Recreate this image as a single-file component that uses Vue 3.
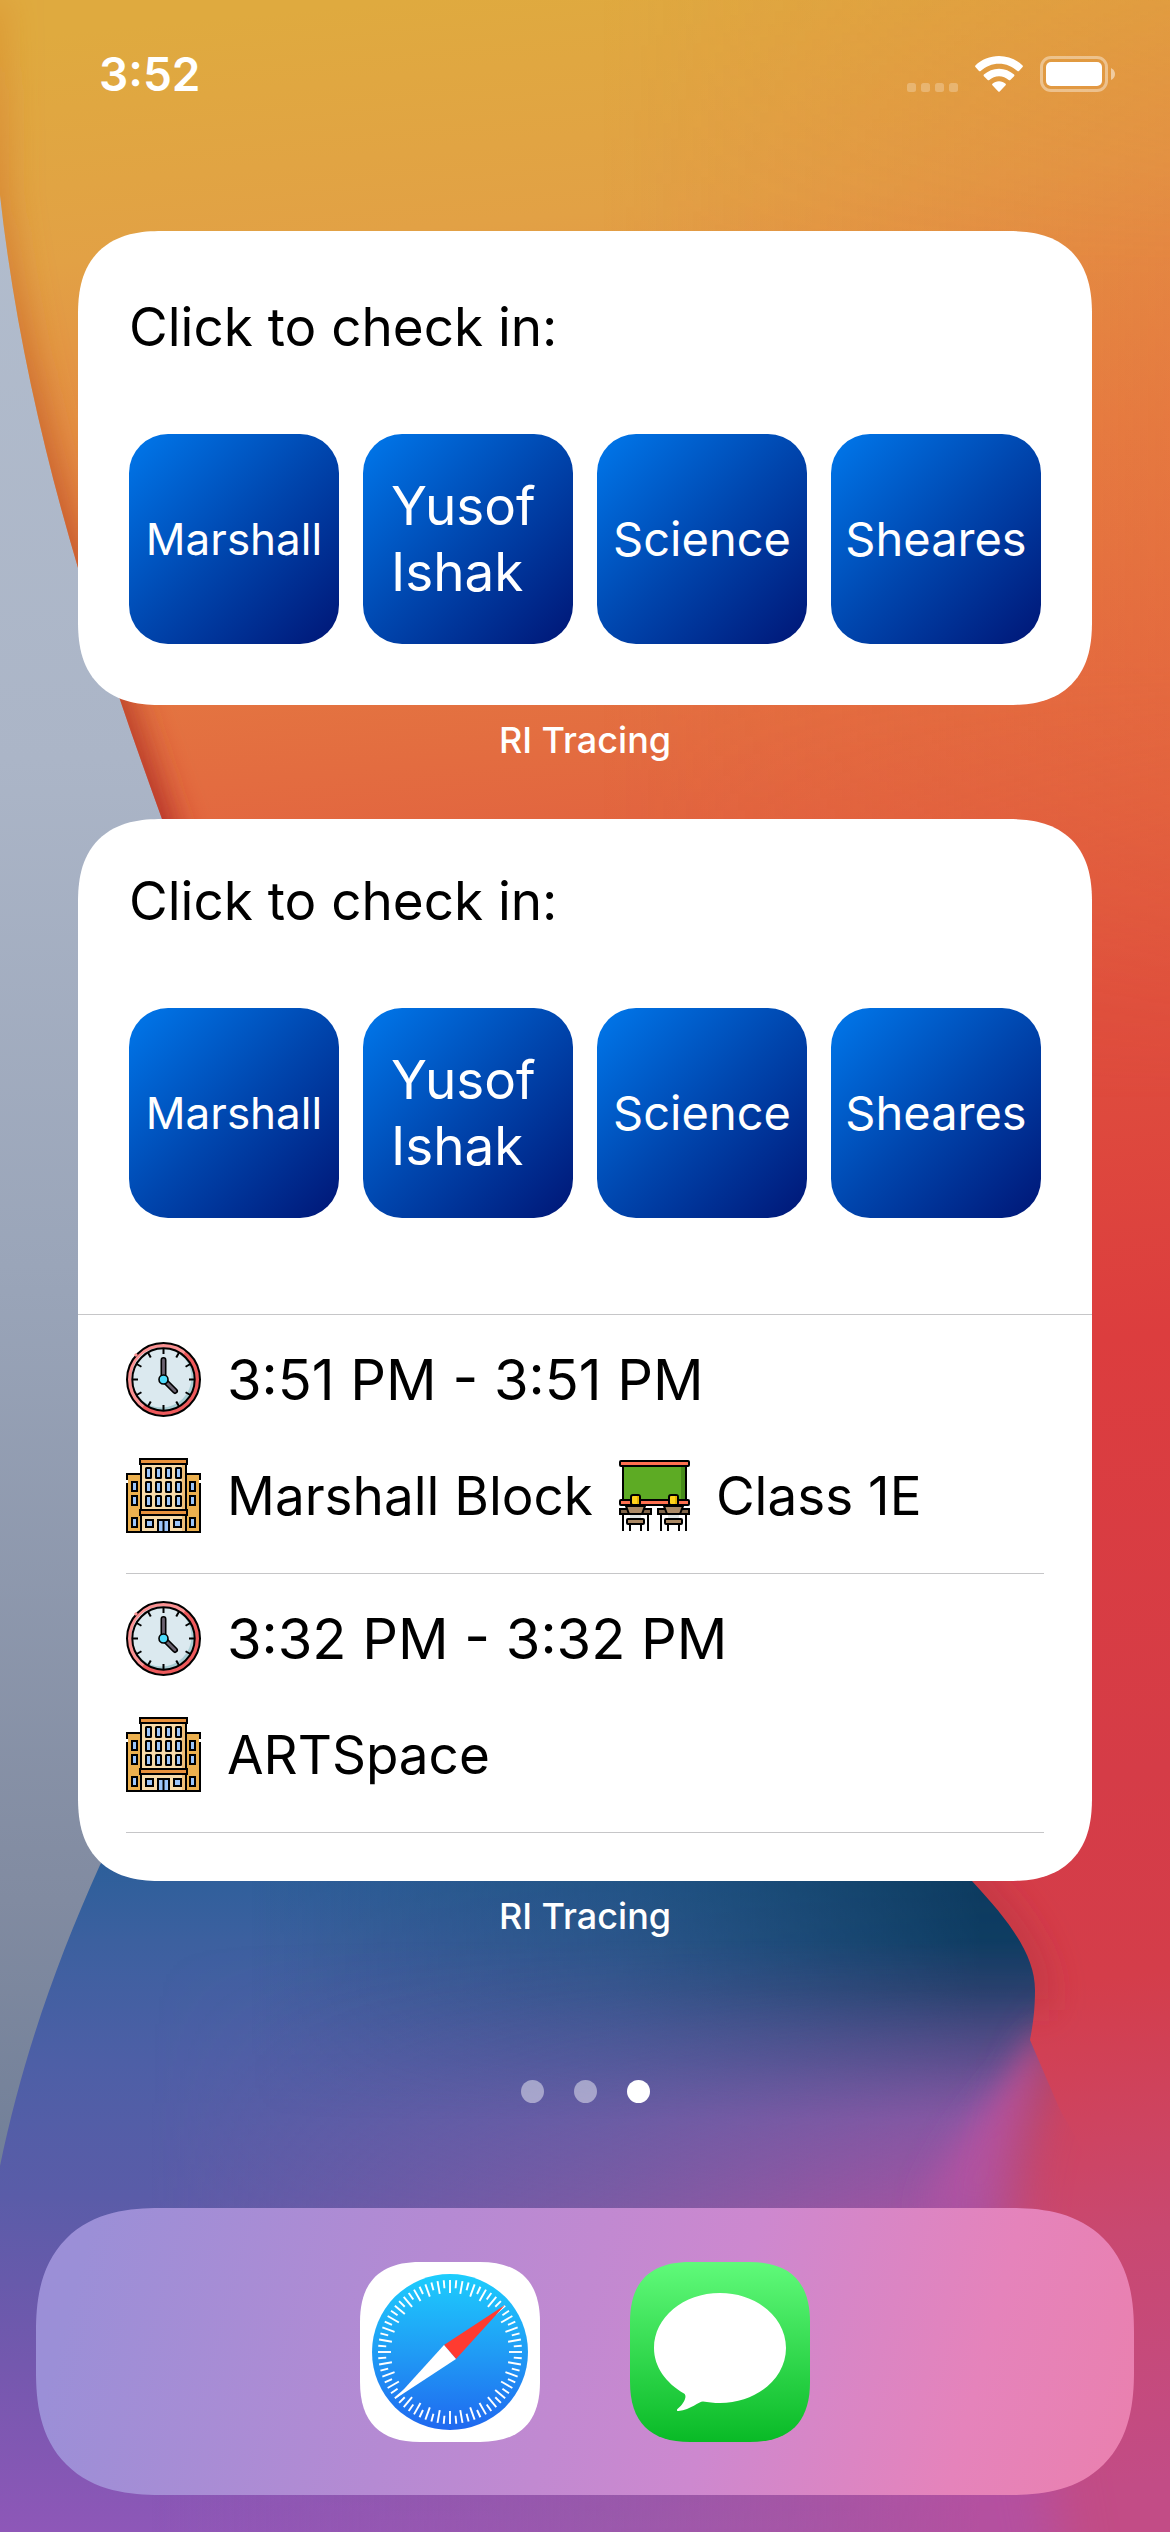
<script setup>
const blocks = [
  { name: 'Marshall', size: 'small' },
  { name: 'Yusof Ishak', size: 'large' },
  { name: 'Science', size: 'medium' },
  { name: 'Sheares', size: 'medium' },
]

const visits = [
  { time: '3:51 PM - 3:51 PM', place: 'Marshall Block', room: 'Class 1E' },
  { time: '3:32 PM - 3:32 PM', place: 'ARTSpace', room: '' },
]

const ticks = Array.from({ length: 72 }, (_, i) => ({ angle: i * 5, end: i % 2 ? 26 : 31 }))
const hours = Array.from({ length: 12 }, (_, i) => i * 30)
const windowCols = [20, 30, 40, 50]
const windowRows = [10, 24, 38]
const sideRows = [24, 38, 60]
const desks = [0, 38]
</script>

<template>
  <div class="screen">
    <svg class="wallpaper" viewBox="0 0 1170 2532" preserveAspectRatio="none" aria-hidden="true">
      <defs>
        <linearGradient id="grey" x1="0" y1="0" x2="0" y2="1">
          <stop offset="0" stop-color="#b4bfcf" />
          <stop offset=".3" stop-color="#abb5c7" />
          <stop offset=".5" stop-color="#9aa5b9" />
          <stop offset=".75" stop-color="#818ba1" />
          <stop offset=".86" stop-color="#717f98" />
        </linearGradient>
        <linearGradient id="warm" gradientUnits="userSpaceOnUse" x1="400" y1="0" x2="640" y2="2532">
          <stop offset="0" stop-color="#dfaa3f" />
          <stop offset=".09" stop-color="#e2a145" />
          <stop offset=".19" stop-color="#e58542" />
          <stop offset=".3" stop-color="#e36c40" />
          <stop offset=".42" stop-color="#df4f3d" />
          <stop offset=".55" stop-color="#dc3d3e" />
          <stop offset=".72" stop-color="#d53c47" />
          <stop offset=".8" stop-color="#d43d4a" />
          <stop offset=".9" stop-color="#c94870" />
          <stop offset="1" stop-color="#c24c86" />
        </linearGradient>
        <linearGradient id="warmRight" gradientUnits="userSpaceOnUse" x1="600" y1="0" x2="1170" y2="0">
          <stop offset="0" stop-color="#e8603c" stop-opacity="0" />
          <stop offset="1" stop-color="#e8603c" stop-opacity=".3" />
        </linearGradient>
        <linearGradient id="topFade" gradientUnits="userSpaceOnUse" x1="0" y1="0" x2="0" y2="1100">
          <stop offset="0" stop-color="#fff" stop-opacity=".5" />
          <stop offset=".25" stop-color="#fff" />
          <stop offset=".6" stop-color="#fff" />
          <stop offset="1" stop-color="#fff" stop-opacity="0" />
        </linearGradient>
        <mask id="topMask"><rect width="1170" height="1100" fill="url(#topFade)" /></mask>
        <linearGradient id="edge" gradientUnits="userSpaceOnUse" x1="0" y1="0" x2="0" y2="819">
          <stop offset="0" stop-color="#d9802c" stop-opacity=".3" />
          <stop offset=".5" stop-color="#c7602a" stop-opacity=".8" />
          <stop offset="1" stop-color="#b02c28" />
        </linearGradient>
        <linearGradient id="cool" gradientUnits="userSpaceOnUse" x1="0" y1="1860" x2="0" y2="2532">
          <stop offset="0" stop-color="#2c5f9a" />
          <stop offset=".12" stop-color="#3c609f" />
          <stop offset=".3" stop-color="#4d5fa6" />
          <stop offset=".5" stop-color="#5a5ca8" />
          <stop offset=".75" stop-color="#7458ae" />
          <stop offset="1" stop-color="#8e57b8" />
        </linearGradient>
        <linearGradient id="teal" gradientUnits="userSpaceOnUse" x1="250" y1="0" x2="980" y2="0">
          <stop offset="0" stop-color="#0e3c60" stop-opacity="0" />
          <stop offset=".5" stop-color="#0e4468" stop-opacity=".4" />
          <stop offset="1" stop-color="#0c3a5e" stop-opacity="1" />
        </linearGradient>
        <linearGradient id="tealFade" gradientUnits="userSpaceOnUse" x1="0" y1="1860" x2="0" y2="2120">
          <stop offset="0" stop-color="#fff" />
          <stop offset=".5" stop-color="#fff" stop-opacity=".9" />
          <stop offset=".78" stop-color="#fff" stop-opacity=".45" />
          <stop offset="1" stop-color="#fff" stop-opacity="0" />
        </linearGradient>
        <mask id="tealMask"><rect y="1700" width="1170" height="500" fill="url(#tealFade)" /></mask>
        <linearGradient id="pink" gradientUnits="userSpaceOnUse" x1="150" y1="0" x2="980" y2="0">
          <stop offset="0" stop-color="#b054a6" stop-opacity="0" />
          <stop offset=".55" stop-color="#a85aa0" stop-opacity=".5" />
          <stop offset="1" stop-color="#b4509f" stop-opacity="1" />
        </linearGradient>
        <linearGradient id="pinkFade" gradientUnits="userSpaceOnUse" x1="0" y1="1940" x2="0" y2="2532">
          <stop offset="0" stop-color="#fff" stop-opacity="0" />
          <stop offset=".2" stop-color="#fff" stop-opacity=".35" />
          <stop offset=".45" stop-color="#fff" stop-opacity=".85" />
          <stop offset="1" stop-color="#fff" />
        </linearGradient>
        <mask id="pinkMask"><rect y="1900" width="1170" height="632" fill="url(#pinkFade)" /></mask>
        <filter id="soft" x="-20%" y="-20%" width="140%" height="140%"><feGaussianBlur stdDeviation="26" /></filter>
        <filter id="soft2" x="-50%" y="-20%" width="200%" height="140%"><feGaussianBlur stdDeviation="16" /></filter>
        <mask id="coolMask" maskUnits="userSpaceOnUse" x="0" y="1600" width="1170" height="932">
          <path d="M-200 1400H1300V1890L1052 2040C1030 2100 1000 2180 1010 2260C1030 2400 1060 2500 1080 2700H-200Z" fill="#fff" filter="url(#soft)" />
        </mask>
        <clipPath id="warmClip"><path d="M0 0H1170V2532H700L260 1100C200 920 185 880 162 819C90 620 25 420 0 195Z" /></clipPath>
        <clipPath id="coolClip"><path d="M0 2166C22 2060 55 1965 100 1865L200 1700H860L972 1881C1010 1922 1035 1955 1035 1990C1035 2010 1033 2024 1030 2040L1060 2110L1170 2300V2532H0Z" /></clipPath>
      </defs>
      <rect width="1170" height="2532" fill="url(#grey)" />
      <g clip-path="url(#warmClip)">
        <rect width="1170" height="2532" fill="url(#warm)" />
        <rect width="1170" height="1100" fill="url(#warmRight)" mask="url(#topMask)" />
        <path d="M-12 0V195C13 420 78 620 150 819L248 1100" fill="none" stroke="url(#edge)" stroke-width="42" filter="url(#soft2)" />
        <path d="M860 1700L972 1881C1010 1922 1035 1955 1035 1990V2010" fill="none" stroke="#a82f40" stroke-opacity=".4" stroke-width="30" filter="url(#soft2)" />
      </g>
      <g clip-path="url(#coolClip)">
        <g mask="url(#coolMask)">
          <rect y="1700" width="1170" height="832" fill="url(#cool)" />
          <rect y="1700" width="1170" height="500" fill="url(#teal)" mask="url(#tealMask)" />
          <rect y="1900" width="1170" height="632" fill="url(#pink)" mask="url(#pinkMask)" />
          <path d="M1040 2030C1015 2085 950 2130 925 2215H1010C1020 2150 1040 2100 1050 2050Z" fill="#ae52a2" filter="url(#soft2)" />
        </g>
      </g>
    </svg>

    <header class="status">
      <time>3:52</time>
      <div class="signals">
        <svg class="cell" viewBox="0 0 51 9" aria-label="No signal">
          <rect v-for="x in [0, 14, 28, 42]" :key="x" :x="x" width="9" height="9" rx="2.5" fill="#fff" fill-opacity=".25" />
        </svg>
        <svg class="wifi" viewBox="0 0 48 36" fill="#fff" aria-label="Wi-Fi">
          <path d="M24 0C33 0 41.500 3.500 47.600 9.500Q48.300 10.300 47.600 11L44 15Q43.200 15.700 42.400 15C37.300 10.300 31 7.700 24 7.700S10.700 10.300 5.600 15Q4.800 15.700 4 15L.400 11Q-.300 10.300 .400 9.500C6.500 3.500 15 0 24 0Z" />
          <path d="M24 12.700C29.700 12.700 35 14.900 39.100 18.600Q39.900 19.400 39.100 20.200L35.300 24Q34.500 24.700 33.700 24C31 21.700 27.700 20.300 24 20.300S17 21.700 14.300 24Q13.500 24.700 12.700 24L8.900 20.200Q8.100 19.400 8.900 18.600C13 14.900 18.300 12.700 24 12.700Z" />
          <path d="M24 25.300C26.500 25.300 28.800 26.200 30.600 27.700Q31.300 28.500 30.600 29.200L24.700 35.500Q24 36.200 23.300 35.500L17.400 29.200Q16.700 28.500 17.400 27.700C19.200 26.200 21.500 25.300 24 25.300Z" />
        </svg>
        <svg class="battery" viewBox="0 0 75 36" aria-label="Battery full">
          <rect x="1.500" y="1.500" width="65" height="33" rx="9.500" fill="none" stroke="#fff" stroke-opacity=".4" stroke-width="3" />
          <rect x="6" y="6" width="56" height="24" rx="5" fill="#fff" />
          <path d="M71 12Q75 14 75 18T71 24Z" fill="#fff" fill-opacity=".5" />
        </svg>
      </div>
    </header>

    <main class="widgets">
      <section v-for="kind in ['compact', 'full']" :key="kind" class="widget">
        <div class="card" :class="kind">
          <div class="check-in">
            <h2>Click to check in:</h2>
            <div class="tiles">
              <button v-for="b in blocks" :key="b.name" type="button" class="tile" :class="b.size">
                <span>{{ b.name }}</span>
              </button>
            </div>
          </div>
          <ul v-if="kind === 'full'" class="visits">
            <li v-for="v in visits" :key="v.time">
              <div class="row time">
                <svg class="icon" viewBox="0 0 75 75" aria-hidden="true">
                  <circle cx="37.500" cy="37.500" r="36.500" fill="#ee5a5c" />
                  <path d="M16 66A36 36 0 0 1 60 9Z" fill="#fa9293" />
                  <circle cx="37.500" cy="37.500" r="36.500" fill="none" stroke="#000" stroke-width="2" />
                  <circle cx="37.500" cy="37.500" r="31" fill="#a9cdd3" />
                  <circle cx="35.500" cy="35.500" r="30" fill="#dbe9ef" />
                  <circle cx="37.500" cy="37.500" r="31.200" fill="none" stroke="#000" stroke-width="2" />
                  <path v-for="h in hours" :key="h" d="M37.500 6V12" stroke="#000" stroke-width="2" :transform="`rotate(${h} 37.5 37.5)`" />
                  <path d="M37.500 37.500V18M37.500 37.500L49 49" stroke="#000" stroke-width="6" stroke-linecap="round" />
                  <path d="M37.500 37.500V18M37.500 37.500L49 49" stroke="#6b6270" stroke-width="2.800" stroke-linecap="round" />
                  <circle cx="37.500" cy="37.500" r="4.500" fill="#4fdcfb" stroke="#000" stroke-width="1.600" />
                  <path d="M9 14L11 12" stroke="#fa9293" stroke-width="3" />
                </svg>
                <span>{{ v.time }}</span>
              </div>
              <div class="row">
                <svg class="icon" viewBox="0 0 75 75" stroke="#000" stroke-width="2" aria-hidden="true">
                  <path d="M1 16H15V74H1ZM60 16H74V74H60Z" fill="#ecb04e" />
                  <rect x="15" y="5" width="45" height="69" fill="#f8dba9" />
                  <path d="M57.500 7V73" stroke="#eebe77" stroke-width="3" />
                  <rect x="14" y="1" width="47" height="5" fill="#e8913c" />
                  <rect x="14" y="52" width="47" height="5" fill="#e8913c" />
                  <g fill="#9cc6fb">
                    <template v-for="y in windowRows" :key="y">
                      <rect v-for="x in windowCols" :key="x" :x="x" :y="y" width="5" height="10" rx=".5" />
                    </template>
                    <template v-for="y in sideRows" :key="y">
                      <rect x="6" :y="y" width="5" height="9" />
                      <rect x="64" :y="y" width="5" height="9" />
                    </template>
                    <rect x="20" y="62" width="7" height="7" />
                    <rect x="48" y="62" width="7" height="7" />
                    <path d="M32 74V62H37.500V74ZM37.500 62H43V74H37.500Z" />
                  </g>
                  <path d="M1 22V25M74 22V25" stroke="#fff" />
                </svg>
                <span>{{ v.place }}</span>
                <svg v-if="v.room" class="icon room" viewBox="0 0 71 71" stroke="#000" stroke-width="2" aria-hidden="true">
                  <rect x="4" y="6" width="63" height="34" fill="#5dab24" />
                  <rect x="62" y="7" width="4" height="32" fill="#478c1b" stroke="none" />
                  <rect x="1" y="1" width="69" height="5" rx="1" fill="#ff7050" />
                  <rect x="1" y="40" width="69" height="5" rx="1" fill="#ff7050" />
                  <g v-for="x in desks" :key="x" :transform="`translate(${x} 0)`">
                    <path d="M4 53V71M29 53V71" fill="none" />
                    <rect x="1" y="49" width="31" height="5" fill="#80654a" />
                    <rect x="12" y="35" width="9" height="10" rx="2" fill="#ffd31c" />
                    <path d="M18 36H20V44H18Z" fill="#e8b500" stroke="none" />
                    <path d="M7 46H26L23 54H10Z" fill="#ab8965" />
                    <rect x="11" y="55" width="11" height="4" fill="#dfe3e3" stroke="none" />
                    <path d="M11 60V71M22 60V71" />
                    <rect x="8" y="59" width="17" height="5" rx="1" fill="#ab8965" />
                  </g>
                </svg>
                <span v-if="v.room">{{ v.room }}</span>
              </div>
            </li>
          </ul>
        </div>
        <p class="name">RI Tracing</p>
      </section>
    </main>

    <nav class="pages" aria-label="Home screen pages">
      <i></i><i></i><i class="current"></i>
    </nav>

    <footer class="dock">
      <button type="button" class="app" aria-label="Safari">
        <svg viewBox="0 0 180 180" aria-hidden="true">
          <defs>
            <linearGradient id="sea" x1="0" y1="0" x2="0" y2="1">
              <stop offset="0" stop-color="#1dcdfd" />
              <stop offset=".5" stop-color="#209cf5" />
              <stop offset="1" stop-color="#1f68ef" />
            </linearGradient>
          </defs>
          <path d="M0 60C0 20 20 0 60 0H120C160 0 180 20 180 60V120C180 160 160 180 120 180H60C20 180 0 160 0 120Z" fill="#fff" />
          <circle cx="90" cy="90" r="78" fill="url(#sea)" />
          <path v-for="t in ticks" :key="t.angle" :d="`M90 18V${t.end}`" stroke="#fff" stroke-width="1.900" :transform="`rotate(${t.angle} 90 90)`" />
          <path d="M145 43L84 83L96 97Z" fill="#ff3b30" />
          <path d="M35 137L84 83L96 97Z" fill="#fff" />
        </svg>
      </button>
      <button type="button" class="app" aria-label="Messages">
        <svg viewBox="0 0 180 180" aria-hidden="true">
          <defs>
            <linearGradient id="leaf" x1="0" y1="0" x2="0" y2="1">
              <stop offset="0" stop-color="#60fa7a" />
              <stop offset="1" stop-color="#09ba26" />
            </linearGradient>
          </defs>
          <path d="M0 60C0 20 20 0 60 0H120C160 0 180 20 180 60V120C180 160 160 180 120 180H60C20 180 0 160 0 120Z" fill="url(#leaf)" />
          <path d="M90 31C126.500 31 156 55.500 156 86S126.500 141 90 141C84 141 78 140.300 73 139.500C69 139.500 61 147.500 48.500 149C46.500 149 46.500 147.800 48 146.500C53 142.500 58 134 54 131.500C36 121 24 105 24 86C24 55.500 53.500 31 90 31Z" fill="#fff" />
        </svg>
      </button>
    </footer>
  </div>
</template>

<style>
body {
  margin: 0;
}
</style>

<style scoped>
.screen {
  position: relative;
  isolation: isolate;
  display: flex;
  flex-direction: column;
  box-sizing: border-box;
  min-height: 100vh;
  padding-bottom: 37px;
  overflow: hidden;
  font-family: Inter, "Liberation Sans", sans-serif;
  color: #000;
}
.wallpaper {
  position: absolute;
  inset: 0;
  z-index: -1;
  width: 100%;
  height: 100%;
}
.status {
  display: flex;
  justify-content: space-between;
  align-items: center;
  height: 148px;
  margin-bottom: 83px;
  padding: 0 55px 0 99px;
  color: #fff;
}
.status time {
  font-size: 46px;
  font-weight: 600;
}
.signals {
  display: flex;
  align-items: flex-end;
  gap: 17px;
}
.signals svg {
  display: block;
  height: 36px;
}
.signals .cell {
  width: 51px;
  height: 9px;
}
.wifi {
  width: 48px;
}
.battery {
  width: 75px;
}
.widgets {
  display: flex;
  flex-direction: column;
  gap: 57px;
  padding: 0 78px;
}
.card {
  overflow: hidden;
  border-radius: 72px;
  background: #fff;
}
@supports (corner-shape: superellipse(1.3)) {
  .card {
    border-radius: 84px;
    corner-shape: superellipse(1.3);
  }
}
.check-in {
  padding: 62px 51px 61px;
}
.full .check-in {
  padding: 48px 51px 96px;
}
h2 {
  margin: 0 0 73px;
  font-size: 53px;
  line-height: 68px;
  font-weight: 400;
}
.tiles {
  display: grid;
  grid-template-columns: repeat(4, 1fr);
  gap: 24px;
}
.tile {
  display: flex;
  align-items: center;
  justify-content: center;
  height: 210px;
  padding: 0 28px;
  border: 0;
  border-radius: 39px;
  background: linear-gradient(135deg, #0078ec 0%, #0046ae 50%, #001676 100%);
  color: #fff;
  font-family: inherit;
  font-weight: 400;
  line-height: 66px;
  text-align: left;
}
.small {
  padding: 0;
  font-size: 44px;
}
.medium {
  padding: 0;
  font-size: 47px;
}
.large {
  font-size: 53px;
}
.visits {
  margin: 0;
  padding: 0 48px 48px;
  border-top: 1px solid #c6c6c8;
  list-style: none;
}
.visits li {
  display: flex;
  flex-direction: column;
  gap: 41px;
  padding: 27px 0 40px;
  border-bottom: 1px solid #c6c6c8;
}
.row {
  display: flex;
  align-items: center;
  height: 75px;
  gap: 26px;
  font-size: 53px;
  white-space: nowrap;
}
.time {
  font-size: 56px;
}
.icon {
  flex: none;
  width: 75px;
  height: 75px;
}
.room {
  width: 71px;
  height: 71px;
}
.name {
  margin: 13px 0 0;
  color: #fff;
  font-size: 36px;
  line-height: 44px;
  font-weight: 500;
  text-align: center;
}
.pages {
  display: flex;
  justify-content: center;
  gap: 30px;
  margin: auto 0 105px;
}
.pages i {
  width: 23px;
  height: 23px;
  border-radius: 50%;
  background: rgba(255, 255, 255, .45);
}
.pages .current {
  background: #fff;
}
.dock {
  display: flex;
  align-items: center;
  justify-content: center;
  gap: 90px;
  height: 287px;
  margin: 0 36px;
  border-radius: 105px;
  background: linear-gradient(105deg, #9b8fd7 5%, #b58ad3 35%, #cd88cf 62%, #e583bb 84%, #ea80ae 100%);
}
@supports (corner-shape: superellipse(1.3)) {
  .dock {
    border-radius: 124px;
    corner-shape: superellipse(1.3);
  }
}
.app {
  width: 180px;
  height: 180px;
  padding: 0;
  border: 0;
  background: none;
}
.app svg {
  display: block;
  width: 100%;
  height: 100%;
}
</style>
